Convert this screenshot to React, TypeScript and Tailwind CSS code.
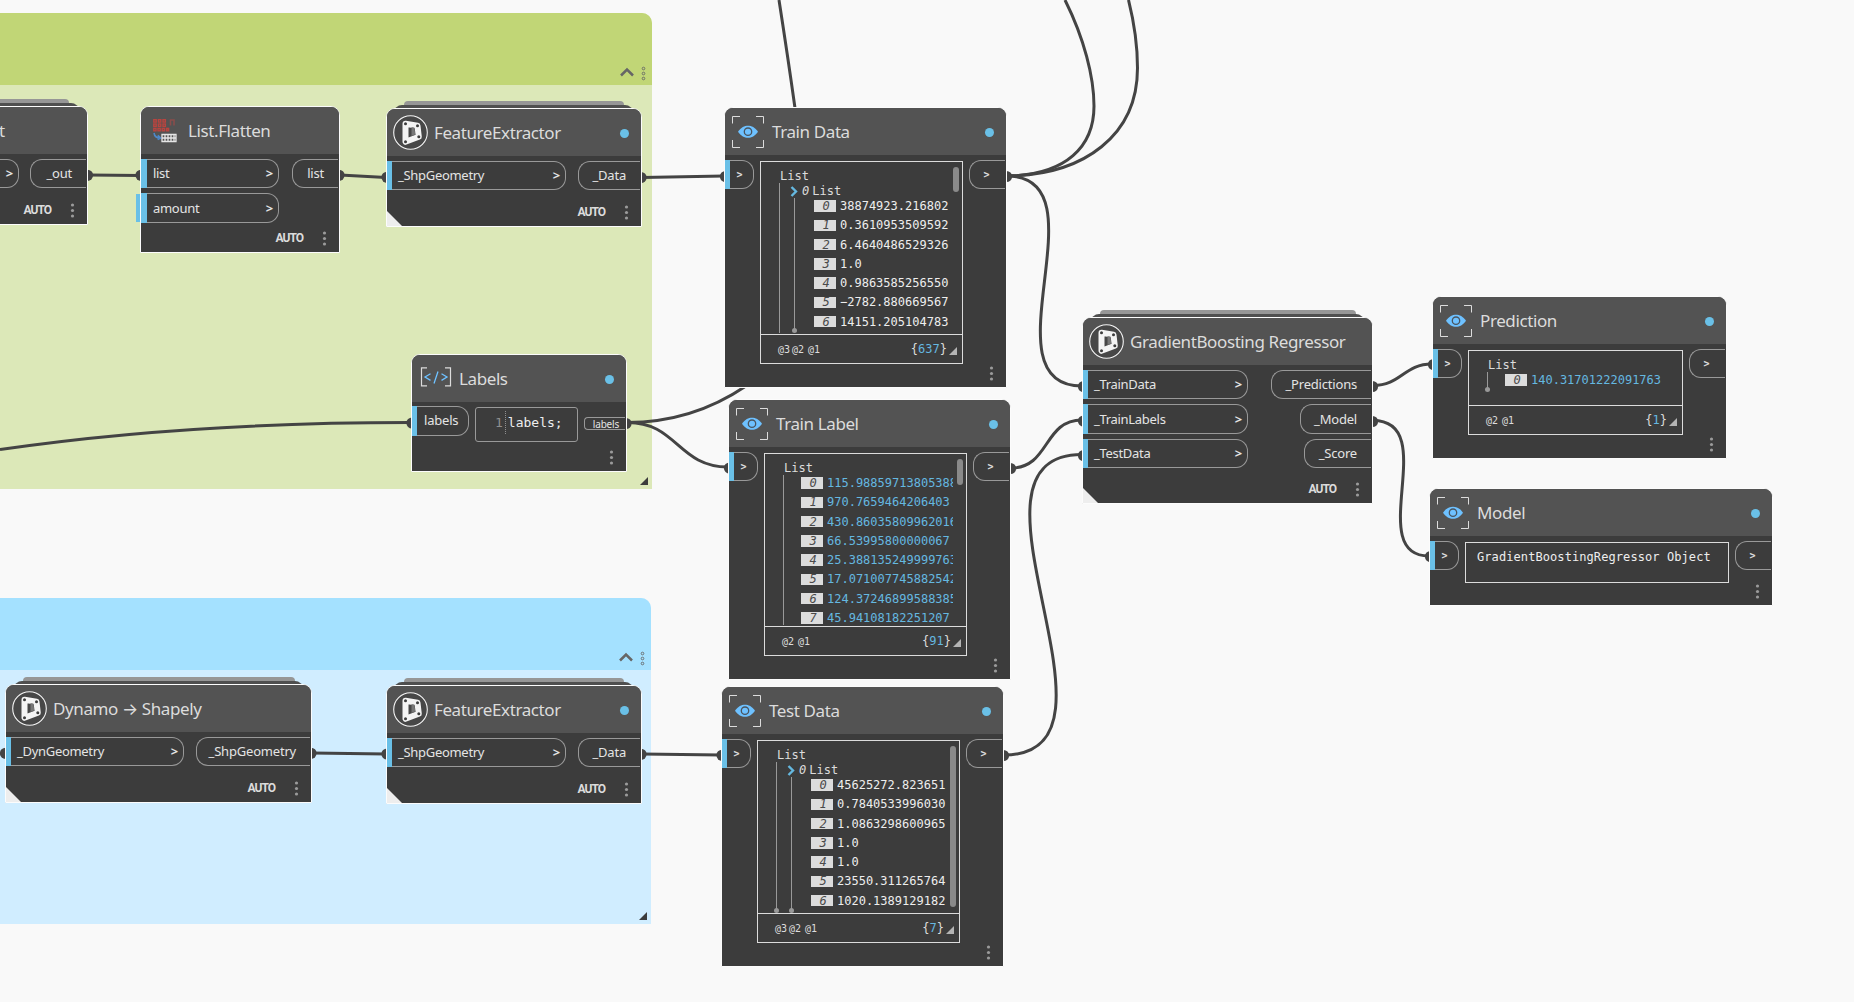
import type { ReactNode } from 'react';

type Port = { name: string; width: string };

const WIRES = [
    'M88 175 L140 175.5',
    'M340 175 L386 177.5',
    'M642 177.5 L724 176',
    'M312 753 L386 754',
    'M642 754 L721 755',
    'M0 449.5 C120 432 250 422.5 411 422.5',
    'M627 422.5 C677 422 678 467 728 467',
    'M627 422.5 C672 422.5 712 409 746 386',
    'M779 0 Q788 58 795 108',
    'M1007 176 C1067 175 1094 146 1094 106 C1094 77 1084 38 1065 0',
    'M1007 176 C1085 175 1137.5 135 1137.5 68 C1137.5 46 1134 22 1128.5 0',
    'M1007 176 C1107 176 982 386 1082 386',
    'M1011 468 C1050 468 1043 420 1082 420',
    'M1004 755 C1144 755 942 454.5 1082 454.5',
    'M1373 385.5 C1401 385.5 1404 364 1432 364',
    'M1373 420.5 C1442 420.5 1363 556 1429 556',
];

const ENDS = [
    [87.5, 175.3], [141, 175.3], [339, 175.3], [387, 177.3], [641, 177.5], [725.5, 176.5],
    [5.5, 753.3], [311, 753.3], [387, 754], [641, 754.3], [722, 755.3],
    [412, 423], [626, 423.5], [729.5, 468], [1006.5, 176.5], [1010.5, 468.5], [1003.5, 755.5],
    [1083.5, 386.5], [1083.5, 421], [1083.5, 455.5], [1372.5, 386.5], [1372.5, 421.5],
    [1433.5, 364.5], [1430.5, 556.5],
];

function Wires() {
    return (
        <svg className="absolute inset-0" width="1854" height="1002" fill="none">
            {WIRES.map((d) => (
                <path key={d} d={d} stroke="#444444" strokeWidth="3" />
            ))}
            {ENDS.map(([x, y]) => (
                <circle key={`${x}-${y}`} cx={x} cy={y} r="5.6" fill="#444444" />
            ))}
        </svg>
    );
}

function PackageIcon() {
    return (
        <svg className="ml-[5px]" width="37" height="37" viewBox="0 0 37 37">
            <circle cx="18.5" cy="18.5" r="16.8" fill="#474747" stroke="#f4f4f4" strokeWidth="1.1" />
            <path d="M13.5 9.8 L25.5 11.8 L26.8 22.8 L13.5 27.8 Z" fill="#474747" stroke="#f4f4f4" strokeWidth="6" strokeLinejoin="round" />
            <path d="M19.5 13 L22.4 13.6 L23.2 20.6 L19.5 22Z" fill="#777777" />
            <g fill="#3c3c3c">
                <circle cx="13.5" cy="9.8" r="1.5" />
                <circle cx="25.5" cy="11.8" r="1.5" />
                <circle cx="26.8" cy="22.8" r="1.5" />
                <circle cx="13.5" cy="27.8" r="1.5" />
            </g>
        </svg>
    );
}

function WatchIcon() {
    return (
        <svg className="ml-[7px]" width="32" height="32" viewBox="0 0 32 32" fill="none">
            <path d="M.5 7.5V.5H8M24 .5h7.5v7M31.5 24v7.5H24M8 31.5H.5V24" stroke="#dcdcdc" />
            <path d="M6 15.7C9 11.3 12.5 9.7 16 9.7s7 1.6 10 6c-3 4.4-6.5 6-10 6s-7-1.6-10-6Z" fill="#6ec1ff" />
            <circle cx="16" cy="15.7" r="3.7" stroke="#4a5560" strokeWidth="1.3" />
        </svg>
    );
}

function CodeIcon() {
    return (
        <svg className="ml-2 mb-[3px]" width="32" height="20" viewBox="0 0 32 20" fill="none">
            <path d="M7 .8H1.5v18H7M25 .8h5.5v18H25" stroke="#dcdcdc" strokeWidth="1.2" />
            <path d="M10.5 6.8 5 10l5.5 3.4M18 4.5l-4 12M21.5 6.8 27 10l-5.5 3.4" stroke="#6ec1ff" strokeWidth="1.3" />
        </svg>
    );
}

function FlattenIcon() {
    return (
        <svg className="ml-3" width="24" height="25" viewBox="0 0 24 25" fill="none">
            <g stroke="#b8443f" strokeWidth="1.4">
                {[0, 4.6, 9.2].map((x) => (
                    <g key={x}>
                        <rect x={x + 0.8} y="1.7" width="2.4" height="2.4" />
                        <rect x={x + 0.8} y="6" width="2.4" height="2.4" />
                    </g>
                ))}
                {[0, 4.2, 8.4, 12.6].map((x) => (
                    <rect key={x} x={x + 0.8} y="10.4" width="2.2" height="2.4" />
                ))}
            </g>
            <path d="M17.5 7.5V2H21v5.500" stroke="#8a4d4b" strokeWidth="1.6" />
            <path d="M1 15c.5 3 2.5 5 6 5M4.8 17.3 7.6 20l-3 1.5" stroke="#4d87c7" strokeWidth="1.6" />
            <path d="M9 16.5h14v7H9zM12 16.5v7M15 16.5v7M18 16.5v7M21 16.5v7M9 20h14" stroke="#e6e6e6" strokeWidth="1.3" />
        </svg>
    );
}

function Dots() {
    return (
        <svg width="5" height="15" viewBox="0 0 5 15" fill="#9b9b9b">
            <circle cx="2.5" cy="2" r="1.6" />
            <circle cx="2.5" cy="7.5" r="1.6" />
            <circle cx="2.5" cy="13" r="1.6" />
        </svg>
    );
}

function Group({ place, header, body }: { place: string; header: string; body: string }) {
    return (
        <section className={`absolute left-0 flex flex-col overflow-hidden rounded-tr-[10px] ${place} ${body}`}>
            <div className={`flex h-[72px] items-end justify-end gap-[6px] pr-[6px] pb-1 ${header}`}>
                <svg className="mb-1" width="16" height="10" viewBox="0 0 16 10" fill="none">
                    <path d="m2 8.500 6-6 6 6" stroke="#666666" strokeWidth="2.5" />
                </svg>
                <svg width="5" height="15" viewBox="0 0 5 15" fill="none" stroke="#666666" strokeWidth=".9">
                    <circle cx="2.5" cy="2.5" r="1.3" />
                    <circle cx="2.5" cy="7.5" r="1.3" />
                    <circle cx="2.5" cy="12.5" r="1.3" />
                </svg>
            </div>
            <svg className="mt-auto mr-1 mb-1 self-end" width="8" height="8">
                <path d="M8 0v8H0Z" fill="#3c3c3c" />
            </svg>
        </section>
    );
}

function Stack({ place, outer, inner }: { place: string; outer: string; inner: string }) {
    return (
        <div className={`absolute flex flex-col items-center ${place}`}>
            <div className={`h-1 rounded-t-[6px] bg-[#969696] ${outer}`} />
            <div className={`h-[14px] rounded-t-[8px] bg-[#4f4f4f] ${inner}`} />
        </div>
    );
}

type NodeProps = {
    place: string;
    title: string;
    icon?: ReactNode;
    status?: boolean;
    auto?: boolean;
    folded?: boolean;
    children: ReactNode;
};

function Node({ place, title, icon, status, auto, folded, children }: NodeProps) {
    return (
        <article className={`absolute flex flex-col overflow-hidden rounded-t-[9px] border border-[#fcfcfc] bg-[#3c3c3c] ${place}`}>
            <header className="flex h-[47px] shrink-0 items-center bg-[#535353]">
                <div className="flex w-[47px] shrink-0 items-center">{icon}</div>
                <h2 className="text-[17px] leading-none tracking-[-0.4px] whitespace-nowrap text-[#dcdcdc]">{title}</h2>
                {status && <span className="mt-[2px] mr-3 ml-auto h-[9px] w-[9px] rounded-full bg-[#6ac0e7]" />}
            </header>
            <div className="min-h-0 flex-1">{children}</div>
            <footer className="flex h-7 shrink-0 items-stretch">
                {folded && (
                    <svg className="self-end" width="15" height="15">
                        <path d="M0 0v15h15Z" fill="#eeeeee" />
                    </svg>
                )}
                <div className="ml-auto flex items-center gap-[19px] pr-3">
                    {auto && <span className="font-[Roboto,sans-serif] text-[12px] leading-none font-bold tracking-[-1px] text-[#dcdcdc]">AUTO</span>}
                    <Dots />
                </div>
            </footer>
        </article>
    );
}

function InPort({ name, width, bar = 'w-[5px]' }: Port & { bar?: string }) {
    return (
        <div className={`flex h-[29.4px] ${width}`}>
            <span className={`bg-[#6ac0e7] ${bar}`} />
            <div className="flex flex-1 items-center justify-between rounded-r-[12px] border border-l-0 border-[#999999] pr-[5px] pl-[6px] text-[13px] leading-none tracking-[-0.3px] text-[#e4e4e4]">
                <span>{name}</span>
                <span className="font-bold">&gt;</span>
            </div>
        </div>
    );
}

function OutPort({ name, width }: Port) {
    return (
        <div className={`mr-px flex h-[29.4px] items-center justify-end rounded-l-[12px] border border-r-0 border-[#999999] pr-[14px] text-[13px] leading-none tracking-[-0.2px] text-[#e4e4e4] ${width}`}>
            {name}
        </div>
    );
}

function Ports({ inputs, outputs, bar }: { inputs: Port[]; outputs: Port[]; bar?: string }) {
    return (
        <div className="flex justify-between pt-[5px]">
            <div className="flex flex-col gap-[5px]">
                {inputs.map((p) => (
                    <InPort key={p.name} {...p} bar={bar} />
                ))}
            </div>
            <div className="flex flex-col items-end gap-[5px]">
                {outputs.map((p) => (
                    <OutPort key={p.name} {...p} />
                ))}
            </div>
        </div>
    );
}

function WatchBody({ children }: { children: ReactNode }) {
    return (
        <div className="flex justify-between pt-[5px] font-['DejaVu_Sans_Mono',monospace]">
            <div className="flex h-[29.4px] w-[29px]">
                <span className="w-[5px] bg-[#6ac0e7]" />
                <span className="flex flex-1 items-center justify-center rounded-r-[12px] border border-l-0 border-[#999999] pr-1 text-[10px] font-bold text-[#dcdcdc]">
                    &gt;
                </span>
            </div>
            {children}
            <span className="mr-px flex h-[29.4px] w-[36px] items-center justify-center rounded-l-[12px] border border-r-0 border-[#999999] pr-[2px] text-[10px] font-bold text-[#dcdcdc]">
                &gt;
            </span>
        </div>
    );
}

function Rows({ values, numeric, indent }: { values: string[]; numeric?: boolean; indent: string }) {
    return (
        <div className={`flex flex-col gap-[7.25px] pt-[2px] ${indent}`}>
            {values.map((v, i) => (
                <div key={v + i} className="flex h-3 items-center">
                    <span className="flex h-[11.5px] w-[22px] shrink-0 items-center justify-center bg-[#dcdcdc] pl-[2px] text-[12px] leading-none text-[#4a4a4a] italic">
                        {i}
                    </span>
                    <span className={`ml-1 flex-1 overflow-hidden text-[12px] leading-[12px] whitespace-nowrap ${numeric ? 'text-[#65b8e0]' : 'text-[#eeeeee]'}`}>
                        {v}
                    </span>
                </div>
            ))}
        </div>
    );
}

function LineEnd() {
    return <span className="absolute -bottom-[3px] -left-[3px] h-[5px] w-[5px] rounded-full bg-[#999999]" />;
}

type PreviewProps = {
    size: string;
    values: string[];
    nested?: boolean;
    numeric?: boolean;
    levels: string[];
    count: string;
    thumb?: string;
    line: string;
    innerLine?: string;
    lineEnd?: boolean;
};

function Preview({ size, values, nested, numeric, levels, count, thumb, line, innerLine = '', lineEnd }: PreviewProps) {
    return (
        <div className={`mt-px flex flex-col border border-[#dcdcdc] text-[12px] ${size}`}>
            <div className="flex min-h-0 flex-1 justify-between">
                <div className="w-[188px] flex-1 pt-[7px] text-[#dcdcdc]">
                    <p className="h-[14px] pl-[19px] text-[12px] leading-[15px]">List</p>
                    <div className={`relative ml-[18px] border-l border-[#999999] ${line}`}>
                        {nested ? (
                            <>
                                <div className="flex h-[15px] items-center pt-px pl-[10px] leading-[15px]">
                                    <svg width="8" height="11" viewBox="0 0 8 11" fill="none">
                                        <path d="m1.500 1 4.500 4.500L1.500 10" stroke="#65b8e0" strokeWidth="2.4" />
                                    </svg>
                                    <span className="ml-1 italic">0</span>
                                    <span className="ml-[3px]">List</span>
                                </div>
                                <div className={`relative ml-[14px] border-l border-[#999999] ${innerLine}`}>
                                    <Rows values={values} numeric={numeric} indent="pl-[19px]" />
                                    <LineEnd />
                                </div>
                            </>
                        ) : (
                            <Rows values={values} numeric={numeric} indent="pl-[17px]" />
                        )}
                        {lineEnd && <LineEnd />}
                    </div>
                </div>
                <div className="w-[13px] shrink-0 pt-[5px] pl-1">
                    {thumb && <div className={`w-[6px] rounded-full bg-[#8a8a8a] ${thumb}`} />}
                </div>
            </div>
            <div className="flex h-[29px] shrink-0 items-center border-t border-[#dcdcdc] pr-[5px] pl-[17px] text-[#dcdcdc]">
                <p className="flex text-[10px]">
                    {levels.map((l, i) => (
                        <span key={l} className={i === levels.length - 1 ? 'ml-[2px]' : 'mr-[2px]'}>{l}</span>
                    ))}
                </p>
                <p className="ml-auto text-[12px]">
                    {'{'}<span className="text-[#65b8e0]">{count}</span>{'}'}
                </p>
                <svg className="mt-1 ml-[2px]" width="8" height="8">
                    <path d="M8 0v8H0Z" fill="#b4b4b4" />
                </svg>
            </div>
        </div>
    );
}

const TRAIN_DATA = ['38874923.216802', '0.3610953509592', '6.4640486529326', '1.0', '0.9863585256550', '−2782.880669567', '14151.205104783'];
const TRAIN_LABEL = ['115.98859713805388', '970.7659464206403', '430.86035809962016', '66.53995800000067', '25.388135249999763', '17.071007745882542', '124.37246899588385', '45.94108182251207'];
const TEST_DATA = ['45625272.823651', '0.7840533996030', '1.0863298600965', '1.0', '1.0', '23550.311265764', '1020.1389129182'];

export default function App() {
    return (
        <main className="relative h-[1002px] w-[1854px] overflow-hidden bg-[#f9f9f9] font-['Noto_Sans','Inter',sans-serif]">
            <Group place="top-[13px] h-[476px] w-[652px]" header="bg-[#c1d676]" body="bg-[#dce8b8]" />
            <Group place="top-[598px] h-[326px] w-[651px]" header="bg-[#a4e1ff]" body="bg-[#d0edff]" />

            <Wires />

            <Stack place="top-[99px] left-[-30px]" outer="w-[99px] self-start" inner="w-[109px] self-start" />
            <Stack place="top-[101px] left-[394px]" outer="w-[220px]" inner="w-[239px]" />
            <Stack place="top-[677px] left-[14px]" outer="w-[272px]" inner="w-[289px]" />
            <Stack place="top-[678px] left-[394px]" outer="w-[220px]" inner="w-[239px]" />
            <Stack place="top-[310px] left-[1091px]" outer="w-[256px]" inner="w-[273px]" />

            <Node place="top-[106px] left-[-49px] h-[119px] w-[137px]" title="t" auto>
                <Ports inputs={[{ name: '', width: 'w-[67px]' }]} outputs={[{ name: '_out', width: 'w-[56px]' }]} />
            </Node>

            <span className="absolute top-[194px] left-[136px] h-7 w-1 bg-[#6ac0e7]" />
            <Node place="top-[106px] left-[140px] h-[147px] w-[200px]" title="List.Flatten" icon={<FlattenIcon />} auto>
                <Ports
                    bar="w-[6px]"
                    inputs={[{ name: 'list', width: 'w-[138px]' }, { name: 'amount', width: 'w-[138px]' }]}
                    outputs={[{ name: 'list', width: 'w-[46px]' }]}
                />
            </Node>

            <Node place="top-[108px] left-[386px] h-[119px] w-[256px]" title="FeatureExtractor" icon={<PackageIcon />} status auto folded>
                <Ports inputs={[{ name: '_ShpGeometry', width: 'w-[179px]' }]} outputs={[{ name: '_Data', width: 'w-[62px]' }]} />
            </Node>

            <Node place="top-[354px] left-[411px] h-[118px] w-[216px]" title="Labels" icon={<CodeIcon />} status>
                <div className="flex items-start pt-1">
                    <div className="flex h-[30px] w-[57px]">
                        <span className="w-[5px] bg-[#6ac0e7]" />
                        <span className="flex flex-1 items-center rounded-r-[12px] border border-l-0 border-[#999999] pb-px pl-[7px] text-[13px] leading-none tracking-[-0.2px] text-[#e4e4e4]">
                            labels
                        </span>
                    </div>
                    <div className="mt-px ml-[6px] flex h-[35px] w-[103px] items-center rounded-[3px] border border-[#999999] pb-1 pl-[19px] font-['DejaVu_Sans_Mono',monospace] text-[13px] leading-none">
                        <span className="text-[#8f8f8f]">1</span>
                        <span className="ml-[2px] h-[23px] border-l border-dotted border-[#8f8f8f]" />
                        <span className="ml-[2px] text-[#eeeeee]">labels;</span>
                    </div>
                    <span className="mt-[11px] mr-px ml-auto flex h-[13px] w-[41px] items-center justify-end rounded-l-[4px] border border-r-0 border-[#999999] pr-[6px] text-[10px] leading-none tracking-[-0.2px] text-[#e4e4e4]">
                        labels
                    </span>
                </div>
            </Node>

            <Node place="top-[684px] left-[5px] h-[119px] w-[307px]" title="Dynamo → Shapely" icon={<PackageIcon />} auto folded>
                <Ports inputs={[{ name: '_DynGeometry', width: 'w-[178px]' }]} outputs={[{ name: '_ShpGeometry', width: 'w-[114px]' }]} />
            </Node>

            <Node place="top-[685px] left-[386px] h-[119px] w-[256px]" title="FeatureExtractor" icon={<PackageIcon />} status auto folded>
                <Ports inputs={[{ name: '_ShpGeometry', width: 'w-[179px]' }]} outputs={[{ name: '_Data', width: 'w-[62px]' }]} />
            </Node>

            <Node place="top-[107px] left-[724px] h-[281px] w-[283px]" title="Train Data" icon={<WatchIcon />} status>
                <WatchBody>
                    <Preview
                        size="h-[203px] w-[203px]"
                        values={TRAIN_DATA}
                        nested
                        levels={['@3', '@2', '@1']}
                        count="637"
                        thumb="h-[25px]"
                        line="h-[150px]"
                        innerLine="h-[132px]"
                    />
                </WatchBody>
            </Node>

            <Node place="top-[399px] left-[728px] h-[281px] w-[283px]" title="Train Label" icon={<WatchIcon />} status>
                <WatchBody>
                    <Preview
                        size="h-[203px] w-[203px]"
                        values={TRAIN_LABEL}
                        numeric
                        levels={['@2', '@1']}
                        count="91"
                        thumb="h-[26px]"
                        line="h-[150px]"
                    />
                </WatchBody>
            </Node>

            <Node place="top-[686px] left-[721px] h-[281px] w-[283px]" title="Test Data" icon={<WatchIcon />} status>
                <WatchBody>
                    <Preview
                        size="h-[203px] w-[203px]"
                        values={TEST_DATA}
                        nested
                        levels={['@3', '@2', '@1']}
                        count="7"
                        thumb="h-[161px]"
                        line="h-[148px]"
                        innerLine="h-[133px]"
                        lineEnd
                    />
                </WatchBody>
            </Node>

            <Node place="top-[317px] left-[1082px] h-[187px] w-[291px]" title="GradientBoosting Regressor" icon={<PackageIcon />} auto folded>
                <Ports
                    inputs={[
                        { name: '_TrainData', width: 'w-[165px]' },
                        { name: '_TrainLabels', width: 'w-[165px]' },
                        { name: '_TestData', width: 'w-[165px]' },
                    ]}
                    outputs={[
                        { name: '_Predictions', width: 'w-[100px]' },
                        { name: '_Model', width: 'w-[71px]' },
                        { name: '_Score', width: 'w-[67px]' },
                    ]}
                />
            </Node>

            <Node place="top-[296px] left-[1432px] h-[163px] w-[295px]" title="Prediction" icon={<WatchIcon />} status>
                <WatchBody>
                    <Preview
                        size="h-[85px] w-[215px]"
                        values={['140.31701222091763']}
                        numeric
                        levels={['@2', '@1']}
                        count="1"
                        line="h-[17px]"
                        lineEnd
                    />
                </WatchBody>
            </Node>

            <Node place="top-[488px] left-[1429px] h-[118px] w-[344px]" title="Model" icon={<WatchIcon />} status>
                <WatchBody>
                    <div className="mt-px h-[41px] w-[264px] border border-[#dcdcdc] pt-[7px] pl-[11px] text-[12px] leading-[15px] tracking-[0.08px] text-[#eeeeee]">
                        GradientBoostingRegressor Object
                    </div>
                </WatchBody>
            </Node>
        </main>
    );
}
